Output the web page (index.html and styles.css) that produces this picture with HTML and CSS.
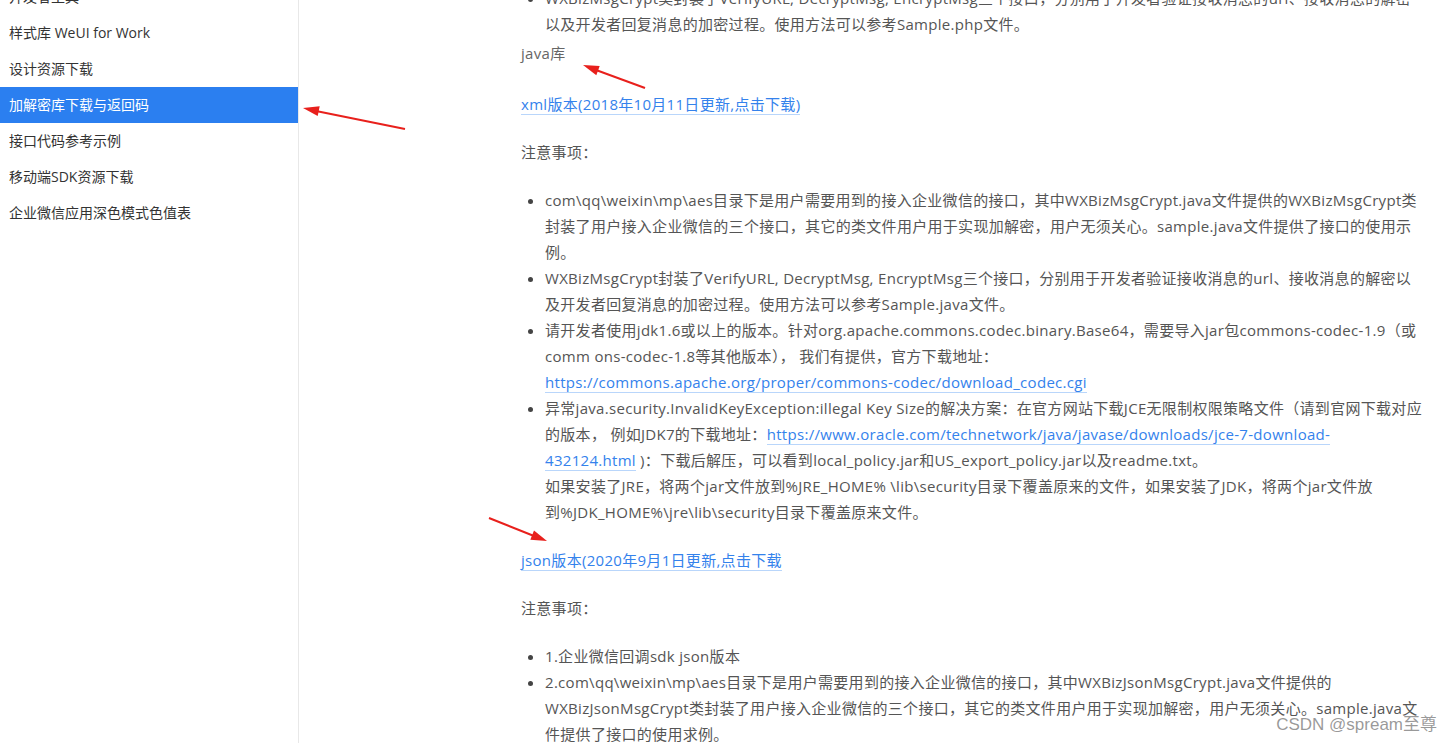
FILE: index.html
```html
<!DOCTYPE html>
<html lang="zh-CN">
<head>
    <meta charset="UTF-8">
    <meta name="viewport" content="width=device-width, initial-scale=1.0">
    <title>加解密库下载与返回码</title>
    <link rel="stylesheet" href="styles.css">
</head>
<body>
    <div class="page">
        <aside class="sidebar">
            <ul class="nav">
                <li>开发者工具</li>
                <li>样式库 WeUI for Work</li>
                <li>设计资源下载</li>
                <li class="active">加解密库下载与返回码</li>
                <li>接口代码参考示例</li>
                <li>移动端SDK资源下载</li>
                <li>企业微信应用深色模式色值表</li>
            </ul>
        </aside>

        <main class="content">
            <!-- php库 (scrolled off the top) -->
            <ul class="list first">
                <li>WXBizMsgCrypt类封装了VerifyURL, DecryptMsg, EncryptMsg三个接口，分别用于开发者验证接收消息的url、接收消息的解密<br>以及开发者回复消息的加密过程。使用方法可以参考Sample.php文件。</li>
            </ul>

            <p class="lib-title">java库</p>

            <p><a href="#">xml版本(2018年10月11日更新,点击下载)</a></p>
            <p>注意事项：</p>
            <ul class="list">
                <li>com\qq\weixin\mp\aes目录下是用户需要用到的接入企业微信的接口，其中WXBizMsgCrypt.java文件提供的WXBizMsgCrypt类<br>封装了用户接入企业微信的三个接口，其它的类文件用户用于实现加解密，用户无须关心。sample.java文件提供了接口的使用示<br>例。</li>
                <li>WXBizMsgCrypt封装了VerifyURL, DecryptMsg, EncryptMsg三个接口，分别用于开发者验证接收消息的url、接收消息的解密以<br>及开发者回复消息的加密过程。使用方法可以参考Sample.java文件。</li>
                <li>请开发者使用jdk1.6或以上的版本。针对org.apache.commons.codec.binary.Base64，需要导入jar包commons-codec-1.9（或<br>comm ons-codec-1.8等其他版本）， 我们有提供，官方下载地址：<br><a href="#">https://commons.apache.org/proper/commons-codec/download_codec.cgi</a></li>
                <li>异常java.security.InvalidKeyException:illegal Key Size的解决方案：在官方网站下载JCE无限制权限策略文件（请到官网下载对应<br>的版本， 例如JDK7的下载地址：<a href="#">https://www.oracle.com/technetwork/java/javase/downloads/jce-7-download-<br>432124.html</a> )：下载后解压，可以看到local_policy.jar和US_export_policy.jar以及readme.txt。<br>如果安装了JRE，将两个jar文件放到%JRE_HOME% \lib\security目录下覆盖原来的文件，如果安装了JDK，将两个jar文件放<br>到%JDK_HOME%\jre\lib\security目录下覆盖原来文件。</li>
            </ul>

            <p><a href="#">json版本(2020年9月1日更新,点击下载</a></p>
            <p>注意事项：</p>
            <ul class="list">
                <li>1.企业微信回调sdk json版本</li>
                <li>2.com\qq\weixin\mp\aes目录下是用户需要用到的接入企业微信的接口，其中WXBizJsonMsgCrypt.java文件提供的<br>WXBizJsonMsgCrypt类封装了用户接入企业微信的三个接口，其它的类文件用户用于实现加解密，用户无须关心。sample.java文<br>件提供了接口的使用求例。</li>
            </ul>
        </main>
    </div>

    <!-- screenshot annotations -->
    <svg class="marks" width="1453" height="743" viewBox="0 0 1453 743">
        <g stroke="#e8201c" stroke-width="2" fill="#e8201c">
            <line x1="405" y1="129" x2="316" y2="111"/>
            <polygon points="303,108 319.7,106.3 317.7,116.1" stroke="none"/>
            <line x1="645" y1="88" x2="596" y2="70"/>
            <polygon points="583,65 599.7,65.9 596.3,75.3" stroke="none"/>
            <line x1="489" y1="518" x2="534" y2="536"/>
            <polygon points="547,541 530.3,539.7 534,530.4" stroke="none"/>
        </g>
    </svg>

    <div class="watermark">CSDN @spream至尊</div>
</body>
</html>
```

FILE: styles.css
```css
body {
    margin: 0;
    font-family: "Open Sans", "Noto Sans CJK SC", sans-serif;
    background: #fff;
    overflow: hidden;
}
.page {
    display: flex;
    height: 743px;
    overflow: hidden;
}
.sidebar {
    width: 298px;
    flex-shrink: 0;
    border-right: 1px solid #e8e8e8;
}
.nav {
    list-style: none;
    margin: -21px 0 0;
    padding: 0;
}
.nav li {
    height: 36px;
    line-height: 36px;
    padding-left: 9px;
    font-size: 14px;
    color: #333;
    white-space: nowrap;
}
.nav li.active {
    background: #2b7ff0;
    color: #fff;
}
.content {
    flex: 1;
    padding-left: 222px;
    font-size: 15px;
    line-height: 26px;
    letter-spacing: 0.3px;
    color: #555;
    white-space: nowrap;
}
.content p {
    margin: 22px 0;
}
.content a {
    color: #3482ec;
    text-decoration: none;
    border-bottom: 1px solid #b9d6fb;
}
.list {
    margin: 22px 0;
    padding-left: 24px;
}
.list li::marker {
    color: #444;
}
.list.first {
    margin-top: -15px;
    margin-bottom: 3px;
}
.content .lib-title {
    margin: 3px 0 25px;
    color: #666;
}
.marks {
    position: absolute;
    left: 0;
    top: 0;
    pointer-events: none;
}
.watermark {
    position: absolute;
    right: 16px;
    bottom: 8px;
    font-family: "Liberation Sans", "Noto Sans CJK SC", sans-serif;
    font-size: 17px;
    color: rgba(120, 120, 120, 0.75);
}
```
